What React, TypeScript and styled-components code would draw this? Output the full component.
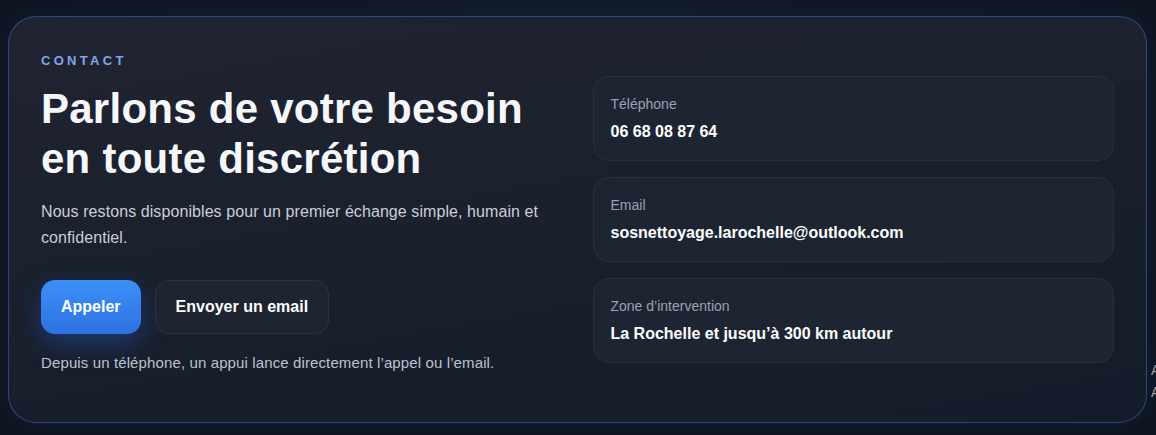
import React from "react";
import styled, { createGlobalStyle } from "styled-components";

const GlobalStyle = createGlobalStyle`
  html, body {
    margin: 0;
    padding: 0;
    background: #0f1521;
    overflow: hidden;
  }
  body {
    font-family: "Liberation Sans", Arial, sans-serif;
    -webkit-font-smoothing: antialiased;
  }
`;

const infos = [
  { label: "Téléphone", value: "06 68 08 87 64" },
  { label: "Email", value: "sosnettoyage.larochelle@outlook.com" },
  { label: "Zone d’intervention", value: "La Rochelle et jusqu’à 300 km autour" },
];

export default function App() {
  return (
    <Page>
      <GlobalStyle />
      <Track>
        <ContactCard>
          <LeftCol>
            <Eyebrow>CONTACT</Eyebrow>
            <Title>
              Parlons de votre besoin
              <br />
              en toute discrétion
            </Title>
            <Lead>
              Nous restons disponibles pour un premier échange simple, humain et
              confidentiel.
            </Lead>
            <Actions>
              <Button $primary>Appeler</Button>
              <Button>Envoyer un email</Button>
            </Actions>
            <Note>Depuis un téléphone, un appui lance directement l’appel ou l’email.</Note>
          </LeftCol>
          <InfoList>
            {infos.map((info) => (
              <InfoCard key={info.label}>
                <InfoLabel>{info.label}</InfoLabel>
                <InfoValue>{info.value}</InfoValue>
              </InfoCard>
            ))}
          </InfoList>
        </ContactCard>
        <NextSection>
          <span>Avis</span>
          <span>Accès</span>
        </NextSection>
      </Track>
    </Page>
  );
}

const Page = styled.div`
  width: 1156px;
  height: 435px;
  overflow: hidden;
  background: radial-gradient(ellipse at 50% 0%, #121a28 0%, #0f1521 70%);
`;

const Track = styled.div`
  display: flex;
  gap: 4px;
  padding: 16px 8px 12px;
`;

const ContactCard = styled.section`
  flex-shrink: 0;
  box-sizing: border-box;
  width: 1139px;
  height: 407px;
  padding: 36px 32px;
  border-radius: 28px;
  border: 1px solid rgba(59, 110, 190, 0.55);
  background: linear-gradient(170deg, #1f2430 0%, #1a202c 50%, #141c2b 100%);
  box-shadow: 0 0 24px rgba(30, 64, 120, 0.18);
  display: grid;
  grid-template-columns: 1fr 1fr;
  column-gap: 30px;
`;

const LeftCol = styled.div`
  display: flex;
  flex-direction: column;
  align-items: flex-start;
`;

const Eyebrow = styled.div`
  font-size: 13px;
  line-height: 16px;
  font-weight: 700;
  letter-spacing: 3.3px;
  color: #7ea6ef;
`;

const Title = styled.h2`
  margin: 15px 0 0;
  font-size: 42px;
  line-height: 1.2;
  font-weight: 700;
  color: #f5f7fb;
  letter-spacing: 0.25px;
`;

const Lead = styled.p`
  margin: 14px 0 0;
  font-size: 16px;
  line-height: 26px;
  letter-spacing: 0.08px;
  color: #c9cfd9;
`;

const Actions = styled.div`
  display: flex;
  gap: 14px;
  margin-top: 29px;
`;

const Button = styled.button<{ $primary?: boolean }>`
  box-sizing: border-box;
  height: 54px;
  padding: 0 20px;
  border-radius: 14px;
  font-family: inherit;
  font-size: 16px;
  font-weight: 700;
  color: #ffffff;
  cursor: pointer;
  border: ${(p) => (p.$primary ? "none" : "1px solid #2d3542")};
  background: ${(p) =>
    p.$primary ? "linear-gradient(180deg, #3d8ff8 0%, #2d72e2 100%)" : "#1e2531"};
  box-shadow: ${(p) => (p.$primary ? "0 10px 26px rgba(37, 99, 235, 0.35)" : "none")};
`;

const Note = styled.p`
  margin: 18px 0 0;
  font-size: 15px;
  line-height: 22px;
  letter-spacing: 0.12px;
  color: #bcc3cf;
`;

const InfoList = styled.div`
  align-self: center;
  display: flex;
  flex-direction: column;
  gap: 16px;
`;

const InfoCard = styled.div`
  box-sizing: border-box;
  height: 85px;
  padding: 17px 17px;
  border-radius: 16px;
  border: 1px solid #29313e;
  background: #1e2532;
  display: flex;
  flex-direction: column;
  gap: 7px;
`;

const InfoLabel = styled.div`
  font-size: 14px;
  line-height: 20px;
  color: #98a3b3;
`;

const InfoValue = styled.div`
  font-size: 16px;
  line-height: 22px;
  font-weight: 700;
  color: #ffffff;
`;

const NextSection = styled.div`
  align-self: flex-end;
  margin-bottom: 20px;
  display: flex;
  flex-direction: column;
  font-size: 14px;
  line-height: 22px;
  color: #9aa3b0;
  white-space: nowrap;
`;
